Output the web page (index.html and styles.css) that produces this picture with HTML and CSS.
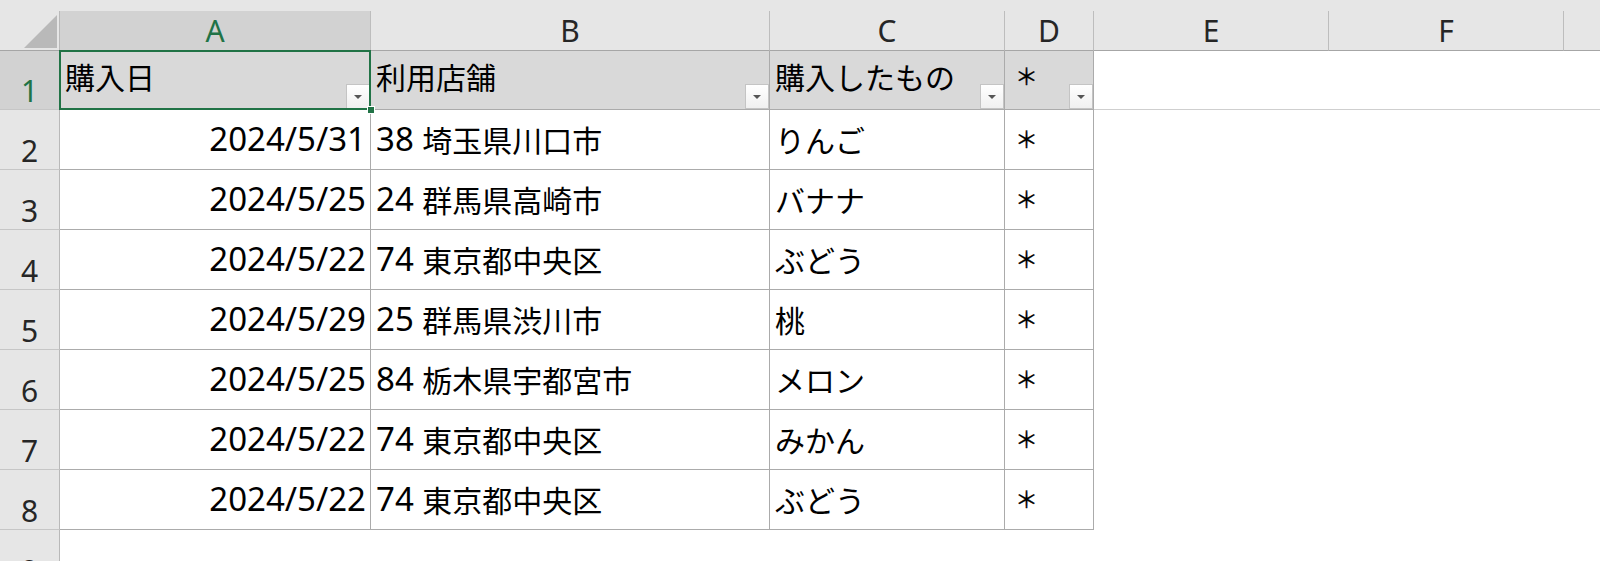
FILE: index.html
```html
<!DOCTYPE html>
<html lang="ja">
<head>
<meta charset="utf-8">
<title>Sheet</title>
<link rel="stylesheet" href="styles.css">
</head>
<body>
<div class="sheet">
  <div class="strip"></div>

  <div class="corner"><svg width="59" height="39" viewBox="0 0 59 39"><polygon points="24,37 57,37 57,4" fill="#b9b9b9"/></svg></div>
  <div class="colhead sel">A</div>
  <div class="colhead">B</div>
  <div class="colhead">C</div>
  <div class="colhead">D</div>
  <div class="colhead">E</div>
  <div class="colhead">F</div>
  <div class="colhead last"></div>

  <div class="rowhead sel">1</div>
  <div class="cell tb th">購入日<span class="filter"></span><span class="selbox"><span class="handle"></span></span></div>
  <div class="cell tb th">利用店舗<span class="filter"></span></div>
  <div class="cell tb th">購入したもの<span class="filter"></span></div>
  <div class="cell tb th"><span class="ast">＊</span><span class="filter"></span></div>
  <div class="cell freeze"></div>
  <div class="cell freeze"></div>
  <div class="cell freeze"></div>

  <div class="rowhead">2</div>
  <div class="cell tb right"><span class="d">2024/5/31</span></div>
  <div class="cell tb"><span class="d">38 </span>埼玉県川口市</div>
  <div class="cell tb">りんご</div>
  <div class="cell tb"><span class="ast">＊</span></div>
  <div class="blank"></div><div class="blank"></div><div class="blank"></div>

  <div class="rowhead">3</div>
  <div class="cell tb right"><span class="d">2024/5/25</span></div>
  <div class="cell tb"><span class="d">24 </span>群馬県高崎市</div>
  <div class="cell tb">バナナ</div>
  <div class="cell tb"><span class="ast">＊</span></div>
  <div class="blank"></div><div class="blank"></div><div class="blank"></div>

  <div class="rowhead">4</div>
  <div class="cell tb right"><span class="d">2024/5/22</span></div>
  <div class="cell tb"><span class="d">74 </span>東京都中央区</div>
  <div class="cell tb">ぶどう</div>
  <div class="cell tb"><span class="ast">＊</span></div>
  <div class="blank"></div><div class="blank"></div><div class="blank"></div>

  <div class="rowhead">5</div>
  <div class="cell tb right"><span class="d">2024/5/29</span></div>
  <div class="cell tb"><span class="d">25 </span>群馬県渋川市</div>
  <div class="cell tb">桃</div>
  <div class="cell tb"><span class="ast">＊</span></div>
  <div class="blank"></div><div class="blank"></div><div class="blank"></div>

  <div class="rowhead">6</div>
  <div class="cell tb right"><span class="d">2024/5/25</span></div>
  <div class="cell tb"><span class="d">84 </span>栃木県宇都宮市</div>
  <div class="cell tb">メロン</div>
  <div class="cell tb"><span class="ast">＊</span></div>
  <div class="blank"></div><div class="blank"></div><div class="blank"></div>

  <div class="rowhead">7</div>
  <div class="cell tb right"><span class="d">2024/5/22</span></div>
  <div class="cell tb"><span class="d">74 </span>東京都中央区</div>
  <div class="cell tb">みかん</div>
  <div class="cell tb"><span class="ast">＊</span></div>
  <div class="blank"></div><div class="blank"></div><div class="blank"></div>

  <div class="rowhead">8</div>
  <div class="cell tb right"><span class="d">2024/5/22</span></div>
  <div class="cell tb"><span class="d">74 </span>東京都中央区</div>
  <div class="cell tb">ぶどう</div>
  <div class="cell tb"><span class="ast">＊</span></div>
  <div class="blank"></div><div class="blank"></div><div class="blank"></div>

  <div class="rowhead">9</div>
</div>
</body>
</html>
```

FILE: styles.css
```css
html, body {
  margin: 0;
  padding: 0;
  background: #ffffff;
  overflow: hidden;
}

body {
  width: 1600px;
  height: 561px;
}

.sheet {
  display: grid;
  grid-template-columns: 60px 311px 399px 235px 89px 235px 235px 1fr;
  grid-template-rows: 11px 40px 59px repeat(8, 60px);
  font-family: "Noto Sans CJK JP", sans-serif;
  color: #000;
}

.strip {
  grid-column: 1 / -1;
  background: #e6e6e6;
}

.corner {
  box-sizing: border-box;
  background: #e6e6e6;
  border-right: 1px solid #b9b9b9;
  border-bottom: 1px solid #a6a6a6;
}

.corner svg {
  display: block;
}

.colhead {
  box-sizing: border-box;
  background: #e6e6e6;
  border-right: 1px solid #bdbdbd;
  border-bottom: 1px solid #a6a6a6;
  font-family: "Noto Sans", sans-serif;
  font-size: 30px;
  line-height: 39px;
  text-align: center;
  color: #262626;
}

.colhead.sel {
  background: #d2d2d2;
  color: #217346;
}

.colhead.last {
  border-right: none;
}

.rowhead {
  box-sizing: border-box;
  background: #e6e6e6;
  border-right: 1px solid #b9b9b9;
  border-bottom: 1px solid #c6c6c6;
  font-family: "Noto Sans", sans-serif;
  font-size: 30px;
  line-height: 36px;
  display: flex;
  align-items: flex-end;
  justify-content: center;
  color: #262626;
}

.rowhead.sel {
  background: #d2d2d2;
  color: #217346;
}

.cell {
  box-sizing: border-box;
  position: relative;
  display: flex;
  align-items: flex-end;
  font-size: 30px;
  line-height: 40px;
  padding: 0 4px 10px 5px;
  white-space: nowrap;
}

.cell.tb {
  border-right: 1px solid #ababab;
  border-bottom: 1px solid #ababab;
}

.cell.th {
  background: #d9d9d9;
  padding-bottom: 13px;
}

.cell.right {
  justify-content: flex-end;
}

.cell.freeze {
  border-bottom: 1px solid #cfcfcf;
}

.d {
  font-family: "Noto Sans", "Noto Sans CJK JP", sans-serif;
  font-size: 33px;
  white-space: pre;
}

.ast {
  font-size: 23px;
  line-height: 1;
  margin: 0 0 9px 5px;
  -webkit-text-stroke: 0.3px #000;
}

.filter {
  position: absolute;
  right: 0;
  bottom: 0;
  width: 24px;
  height: 25px;
  box-sizing: border-box;
  border: 1px solid #c4c4c4;
  background: linear-gradient(#ffffff, #f0f0f0);
}

.filter::after {
  content: "";
  position: absolute;
  left: 50%;
  top: 50%;
  margin: -2px 0 0 -4px;
  border-left: 4px solid transparent;
  border-right: 4px solid transparent;
  border-top: 4px solid #555555;
}

.selbox {
  position: absolute;
  left: -1px;
  top: -1px;
  right: -1px;
  bottom: -1px;
  border: 2px solid #217346;
  z-index: 2;
}

.handle {
  position: absolute;
  right: -6px;
  bottom: -6px;
  width: 6px;
  height: 6px;
  background: #217346;
  border: 1px solid #ffffff;
}
```
